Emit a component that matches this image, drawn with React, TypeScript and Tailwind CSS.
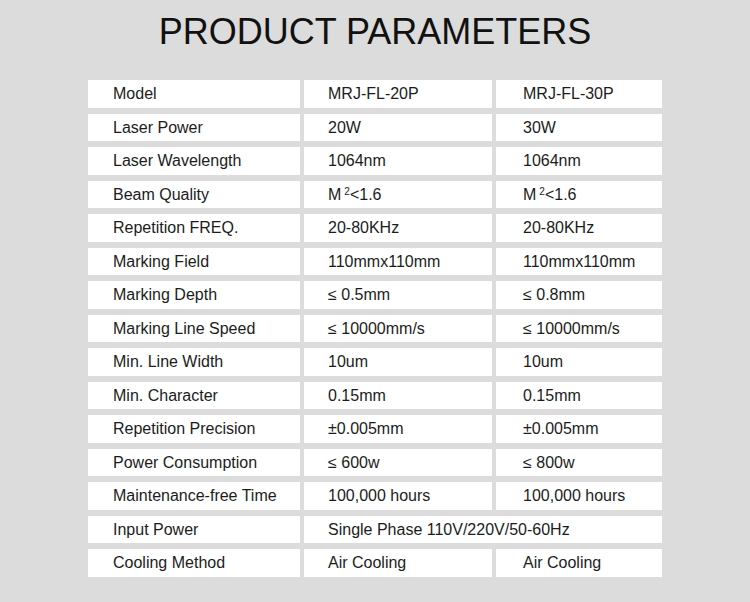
import React from "react";

type Row = { label: string; a: React.ReactNode; b?: React.ReactNode; span?: boolean };

const M2 = (
  <span>
    M<span className="relative -top-[5px] ml-[3px] text-[10px]">2</span>&lt;1.6
  </span>
);

const rows: Row[] = [
  { label: "Model", a: "MRJ-FL-20P", b: "MRJ-FL-30P" },
  { label: "Laser Power", a: "20W", b: "30W" },
  { label: "Laser Wavelength", a: "1064nm", b: "1064nm" },
  { label: "Beam Quality", a: M2, b: M2 },
  { label: "Repetition FREQ.", a: "20-80KHz", b: "20-80KHz" },
  { label: "Marking Field", a: "110mmx110mm", b: "110mmx110mm" },
  { label: "Marking Depth", a: "≤ 0.5mm", b: "≤ 0.8mm" },
  { label: "Marking Line Speed", a: "≤ 10000mm/s", b: "≤ 10000mm/s" },
  { label: "Min. Line Width", a: "10um", b: "10um" },
  { label: "Min. Character", a: "0.15mm", b: "0.15mm" },
  { label: "Repetition Precision", a: "±0.005mm", b: "±0.005mm" },
  { label: "Power Consumption", a: "≤ 600w", b: "≤ 800w" },
  { label: "Maintenance-free Time", a: "100,000 hours", b: "100,000 hours" },
  { label: "Input Power", a: "Single Phase 110V/220V/50-60Hz", span: true },
  { label: "Cooling Method", a: "Air Cooling", b: "Air Cooling" },
];

export default function App() {
  return (
    <div
      className="w-[750px] h-[602px] bg-[#dcdcdc] text-[#1c1c1c] overflow-hidden"
      style={{ fontFamily: '"Liberation Sans", Arial, sans-serif' }}
    >
      <h1 className="pt-[14px] text-center text-[36px] leading-none text-[#111]">PRODUCT PARAMETERS</h1>
      <div className="mt-[30px] flex justify-center">
        <div className="grid grid-cols-[212px_188px_166px] auto-rows-[27.5px] gap-x-[4px] gap-y-[6px] text-[16px] leading-[27px]">
          {rows.map((r) => (
            <React.Fragment key={r.label}>
              <div className="bg-white pl-[25px] whitespace-nowrap">{r.label}</div>
              {r.span ? (
                <div className="col-span-2 bg-white pl-[24px] whitespace-nowrap">{r.a}</div>
              ) : (
                <>
                  <div className="bg-white pl-[24px] whitespace-nowrap">{r.a}</div>
                  <div className="bg-white pl-[27px] whitespace-nowrap">{r.b}</div>
                </>
              )}
            </React.Fragment>
          ))}
        </div>
      </div>
    </div>
  );
}
